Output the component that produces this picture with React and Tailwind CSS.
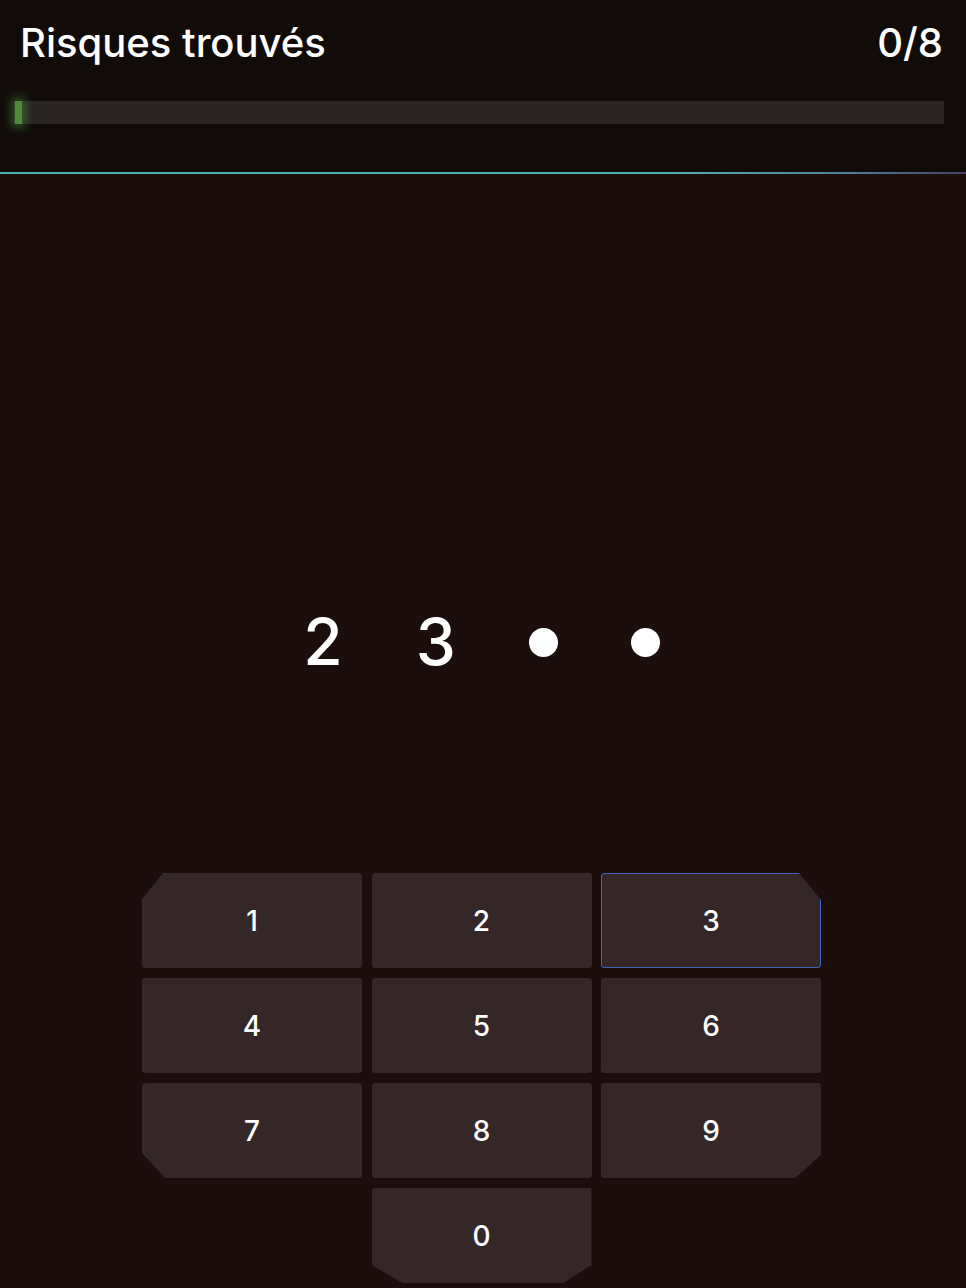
export default function App() {
  const keys = [
    { k: "1", clip: "[clip-path:polygon(21px_0,100%_0,100%_100%,0_100%,0_26px)]" },
    { k: "2", clip: "" },
    { k: "3", clip: "[clip-path:polygon(0_0,calc(100%_-_22px)_0,100%_27px,100%_100%,0_100%)] border border-[#4163c0]" },
    { k: "4", clip: "" },
    { k: "5", clip: "" },
    { k: "6", clip: "" },
    { k: "7", clip: "[clip-path:polygon(0_0,100%_0,100%_100%,23px_100%,0_calc(100%_-_25px))]" },
    { k: "8", clip: "" },
    { k: "9", clip: "[clip-path:polygon(0_0,100%_0,100%_calc(100%_-_23px),calc(100%_-_26px)_100%,0_100%)]" },
  ];
  return (
    <div className="min-h-[1288px] w-full bg-[#1c0e0d] text-white font-['Inter','Liberation_Sans',sans-serif] flex flex-col">
      <header className="bg-[#110b0a] h-[172px] flex flex-col">
        <div className="flex justify-between items-start pl-5 pr-[23px] pt-[23px]">
          <h1 className="text-[40px] leading-none font-medium tracking-[0px]">Risques trouvés</h1>
          <span className="text-[40px] leading-none font-medium">0/8</span>
        </div>
        <div className="mt-[38px] ml-[14px] mr-[22px] h-[23px] bg-[#2a2523] relative">
          <div className="absolute left-[1px] top-0 h-full w-[7px] bg-[#4d8a3a] shadow-[0_0_10px_4px_rgba(80,160,60,0.45)]" />
        </div>
      </header>
      <div className="h-[2px] bg-[linear-gradient(to_right,#4fb1b0_0%,#4fb1b0_70%,#4e7f95_88%,#4a3f66_100%)]" />
      <main className="flex flex-col items-center">
        <div className="h-[501px] flex items-end justify-center">
          <div className="flex items-center gap-[73px] pb-[1px] ml-[-3px]">
            <span className="text-[64px] leading-none font-medium">2</span>
            <span className="text-[64px] leading-none font-medium">3</span>
            <span className="w-[29px] h-[29px] rounded-full bg-white" />
            <span className="w-[29px] h-[29px] rounded-full bg-white" />
          </div>
        </div>
        <div className="mt-[198px] grid grid-cols-3 w-[679px] gap-x-[9.5px] gap-y-[10px] ml-[-3px]">
          {keys.map((b) => (
            <button
              key={b.k}
              className={`h-[95px] bg-[#352728] rounded-[3px] flex items-center justify-center text-[28px] leading-none font-medium text-white ${b.clip}`}
            >
              {b.k}
            </button>
          ))}
          <div />
          <button className="h-[95px] bg-[#352728] rounded-[3px] flex items-center justify-center text-[28px] leading-none font-medium text-white [clip-path:polygon(0_0,100%_0,100%_calc(100%_-_18px),calc(100%_-_28px)_100%,31px_100%,0_calc(100%_-_18px))]">
            0
          </button>
          <div />
        </div>
      </main>
    </div>
  );
}
